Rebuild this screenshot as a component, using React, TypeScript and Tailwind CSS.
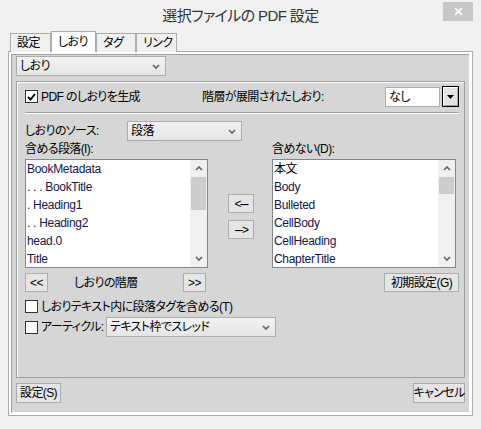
import React from 'react';

const font = "font-['Liberation_Sans','Noto_Sans_CJK_JP',sans-serif] [font-feature-settings:'palt']";

function Chevron({ up }: { up?: boolean }) {
  return (
    <svg width="8" height="5" viewBox="0 0 8 5" className="shrink-0">
      <path d={up ? 'M1 4 L4 1 L7 4' : 'M1 1 L4 4 L7 1'} fill="none" stroke="#606060" strokeWidth="1.6" />
    </svg>
  );
}

function Combo({ label, className }: { label: string; className?: string }) {
  return (
    <div
      className={`flex h-[20px] items-center justify-between border border-[#acacac] bg-gradient-to-b from-[#f2f2f2] to-[#e5e5e5] pl-[3px] pr-[5px] ${className ?? ''}`}
    >
      <span className="whitespace-nowrap">{label}</span>
      <Chevron />
    </div>
  );
}

function Btn({ children, className }: { children: React.ReactNode; className?: string }) {
  return (
    <div className={`flex items-center justify-center whitespace-nowrap border border-[#acacac] bg-[#e5e5e5] ${className ?? ''}`}>
      {children}
    </div>
  );
}

function Check({ checked }: { checked?: boolean }) {
  return (
    <div className="flex h-[13px] w-[13px] shrink-0 items-center justify-center border border-[#333] bg-white">
      {checked && (
        <svg width="9" height="8" viewBox="0 0 9 8">
          <path d="M1 4 L3.5 6.5 L8 1" fill="none" stroke="#000" strokeWidth="1.9" />
        </svg>
      )}
    </div>
  );
}

function ListBox({ items, thumb, className }: { items: string[]; thumb: number; className?: string }) {
  return (
    <div className={`flex h-[109px] border border-[#828790] bg-white ${className ?? ''}`}>
      <div className="flex flex-1 flex-col overflow-hidden pl-[1px]">
        {items.map((it) => (
          <div
            key={it}
            className={`h-[18px] leading-[18px] whitespace-nowrap ${/^[\x00-\x7f]/.test(it) ? 'text-[#14144e] tracking-[-0.3px]' : 'text-black'}`}
          >
            {it}
          </div>
        ))}
      </div>
      <div className="flex w-[17px] flex-col bg-[#f0f0f0]">
        <div className="flex h-[17px] items-center justify-center">
          <Chevron up />
        </div>
        <div className="mx-px bg-[#cdcdcd]" style={{ height: thumb }} />
        <div className="flex-1" />
        <div className="flex h-[17px] items-center justify-center">
          <Chevron />
        </div>
      </div>
    </div>
  );
}

export default function App() {
  const tabs = [
    { t: '設定', w: 'w-[41px] h-[19px]', sel: false },
    { t: 'しおり', w: 'w-[45px] h-[21px]', sel: true },
    { t: 'タグ', w: 'w-[40px] h-[19px]', sel: false },
    { t: 'リンク', w: 'w-[41px] h-[19px]', sel: false },
  ];

  return (
    <div
      className={`flex h-[429px] w-[481px] flex-col bg-[#f0f0f0] text-[12px] leading-[14px] tracking-[-0.6px] text-black ${font}`}
    >
      {/* title bar */}
      <div className="relative flex h-[31px] shrink-0 items-center justify-center text-[15px] text-[#333]">
        <span className="tracking-[-0.6px]">選択ファイルの PDF 設定</span>
        <div className="absolute left-[443px] top-[2px] flex h-[19px] w-[30px] items-center justify-center bg-[#c7c7c7]">
          <svg width="9" height="9" viewBox="0 0 9 9">
            <path d="M1 1 L8 8 M8 1 L1 8" stroke="#fff" strokeWidth="1.6" />
          </svg>
        </div>
      </div>

      {/* tabs */}
      <div className="relative z-10 -mb-px flex h-[21px] shrink-0 items-end pl-[10px]">
        {tabs.map((tab) => (
          <div
            key={tab.t}
            className={`flex items-center whitespace-nowrap border border-b-0 border-[#acacac] pl-[6px] ${tab.w} ${tab.sel ? 'bg-white' : 'bg-[#f0f0f0]'}`}
          >
            {tab.t}
          </div>
        ))}
      </div>

      {/* tab panel */}
      <div className="ml-[8px] flex h-[365px] w-[465px] flex-col border border-[#acacac] bg-white p-[2px]">
        <div className="flex flex-1 flex-col border border-[#a0a0a0] border-b-white border-r-white bg-[#d6d6d6] px-[4px]">
          <Combo label="しおり" className="mt-[1px] w-[150px]" />

          {/* group box */}
          <div className="mt-[5px] flex h-[297px] flex-col border border-[#a0a0a0] pl-[8px] pr-[5px] shadow-[inset_1px_1px_0_#fff]">
            <div className="mt-[4px] flex h-[21px] items-center whitespace-nowrap">
              <div className="flex w-[177px] items-center gap-[3px]">
                <Check checked />
                <span>PDF のしおりを生成</span>
              </div>
              <span>階層が展開されたしおり:</span>
              <div className="flex-1" />
              <div className="flex h-[20px] w-[55px] items-center border border-[#adadad] bg-white pl-[3px]">なし</div>
              <div className="ml-[2px] flex h-[21px] w-[17px] items-center justify-center border border-black bg-[#e3e3e3] shadow-[inset_1px_1px_0_#fff,inset_-1px_-1px_0_#a0a0a0]">
                <svg width="7" height="4" viewBox="0 0 7 4">
                  <path d="M0 0 H7 L3.5 4 Z" fill="#000" />
                </svg>
              </div>
            </div>

            <div className="mt-[5px] h-px bg-[#a0a0a0]" />
            <div className="h-px bg-white" />

            <div className="mt-[7px] flex h-[20px] items-center whitespace-nowrap">
              <span className="w-[102px]">しおりのソース:</span>
              <Combo label="段落" className="w-[115px]" />
            </div>

            <div className="flex h-[18px] items-center whitespace-nowrap pb-[2px]">
              <span className="w-[247px]">含める段落(I):</span>
              <span>含めない(D):</span>
            </div>

            <div className="flex">
              <ListBox
                className="w-[183px]"
                thumb={33}
                items={['BookMetadata', '. . . BookTitle', '. Heading1', '. . Heading2', 'head.0', 'Title']}
              />
              <div className="flex w-[64px] flex-col pl-[20px] pt-[35px]">
                <Btn className="h-[19px] w-[26px] tracking-[-1.5px]">&lt;---</Btn>
                <Btn className="mt-[7px] h-[19px] w-[26px] tracking-[-1.5px]">---&gt;</Btn>
              </div>
              <ListBox
                className="w-[184px]"
                thumb={17}
                items={['本文', 'Body', 'Bulleted', 'CellBody', 'CellHeading', 'ChapterTitle']}
              />
            </div>

            <div className="mt-[5px] flex h-[19px] items-center whitespace-nowrap">
              <Btn className="h-[19px] w-[23px]">&lt;&lt;</Btn>
              <span className="ml-[26px] w-[109px]">しおりの階層</span>
              <Btn className="h-[19px] w-[23px]">&gt;&gt;</Btn>
              <div className="flex-1" />
              <Btn className="h-[19px] w-[75px]">初期設定(G)</Btn>
            </div>

            <div className="mt-[8px] flex h-[13px] items-center gap-[3px] whitespace-nowrap">
              <Check />
              <span>しおりテキスト内に段落タグを含める(T)</span>
            </div>

            <div className="mt-[4px] flex h-[20px] items-center whitespace-nowrap">
              <div className="flex w-[81px] items-center gap-[3px]">
                <Check />
                <span>アーティクル:</span>
              </div>
              <Combo label="テキスト枠でスレッド" className="w-[170px]" />
            </div>
          </div>

          <div className="mt-[5px] flex">
            <Btn className="h-[20px] w-[45px]">設定(S)</Btn>
            <div className="flex-1" />
            <Btn className="h-[20px] w-[52px]">キャンセル</Btn>
          </div>
        </div>
      </div>
    </div>
  );
}
